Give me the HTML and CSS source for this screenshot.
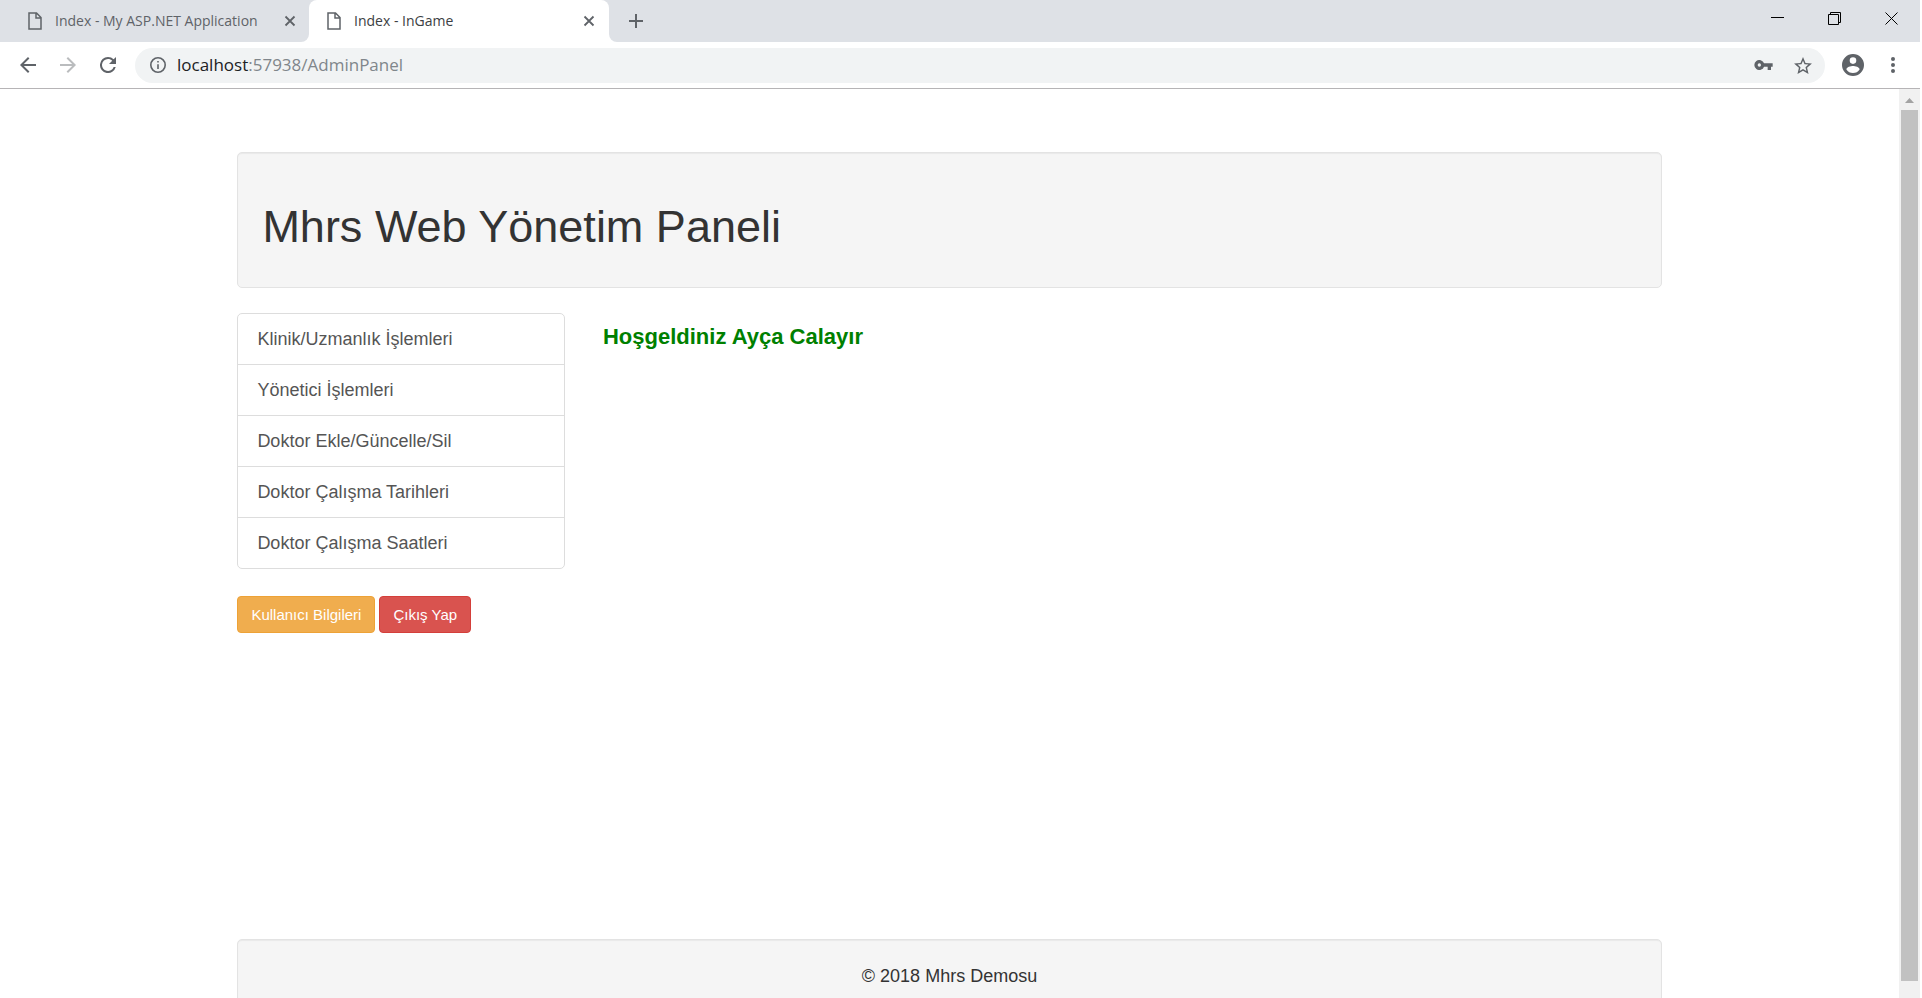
FILE: index.html
```html
<!DOCTYPE html>
<html lang="tr">
<head>
<meta charset="utf-8">
<title>Index - InGame</title>
<link rel="stylesheet" href="styles.css">
</head>
<body>
<div class="browser">
  <div class="tabstrip">
    <div class="tab">
      <svg class="icon-file" viewBox="0 0 14 18"><path d="M1 1h7.500l4.500 4.500v11.500H1zM8 1v5h5"/></svg>
      <span class="tab-title">Index - My ASP.NET Application</span>
      <button class="icon-btn" aria-label="Close tab"><svg class="icon-close" viewBox="0 0 12 12"><path d="M1.500 1.500l9 9M10.500 1.500l-9 9"/></svg></button>
    </div>
    <div class="tab tab-active">
      <svg class="icon-file" viewBox="0 0 14 18"><path d="M1 1h7.500l4.500 4.500v11.500H1zM8 1v5h5"/></svg>
      <span class="tab-title">Index - InGame</span>
      <button class="icon-btn" aria-label="Close tab"><svg class="icon-close" viewBox="0 0 12 12"><path d="M1.500 1.500l9 9M10.500 1.500l-9 9"/></svg></button>
    </div>
    <button class="icon-btn new-tab" aria-label="New tab"><svg class="icon-plus" viewBox="0 0 16 16"><path d="M8 1v14M1 8h14"/></svg></button>
    <div class="window-controls">
      <button class="icon-btn win-btn" aria-label="Minimize"><svg class="icon-win" viewBox="0 0 14 14"><path d="M0 5.500h13"/></svg></button>
      <button class="icon-btn win-btn" aria-label="Restore"><svg class="icon-win" viewBox="0 0 14 14"><path d="M.5 2.500h10v10H.5zM2.500 2.500v-2h10v10h-2"/></svg></button>
      <button class="icon-btn win-btn" aria-label="Close"><svg class="icon-win" viewBox="0 0 14 14"><path d="M.5.500l12 12M12.500.500l-12 12"/></svg></button>
    </div>
  </div>
  <div class="toolbar">
    <button class="icon-btn nav-btn" aria-label="Back"><svg class="icon-nav" viewBox="4 4 16 16"><path d="M20 11H7.830l5.590-5.590L12 4l-8 8 8 8 1.410-1.410L7.830 13H20z"/></svg></button>
    <button class="icon-btn nav-btn nav-off" aria-label="Forward"><svg class="icon-nav" viewBox="4 4 16 16"><path d="M12 4l-1.410 1.410L16.170 11H4v2h12.170l-5.580 5.590L12 20l8-8z"/></svg></button>
    <button class="icon-btn nav-btn" aria-label="Reload"><svg class="icon-nav" viewBox="4 4 16 16"><path d="M17.650 6.350A7.960 7.960 0 0 0 12 4a8 8 0 1 0 7.730 10h-2.080A6 6 0 1 1 12 6c1.660 0 3.140.690 4.220 1.780L13 11h7V4z"/></svg></button>
    <div class="omnibox">
      <svg class="icon-info" viewBox="2 2 20 20"><path d="M11 7h2v2h-2zm0 4h2v6h-2zm1-9a10 10 0 1 0 0 20 10 10 0 0 0 0-20zm0 18a8 8 0 1 1 0-16 8 8 0 0 1 0 16z"/></svg>
      <div class="url">localhost<span class="url-rest">:57938/AdminPanel</span></div>
      <button class="icon-btn" aria-label="Saved passwords"><svg class="icon-key" viewBox="1 6 22 12"><path d="M12.650 10A6 6 0 1 0 12.650 14H17v4h4v-4h2v-4zM7 14a2 2 0 1 1 0-4 2 2 0 0 1 0 4z"/></svg></button>
      <button class="icon-btn" aria-label="Bookmark"><svg class="icon-star" viewBox="2 2 20 19"><path d="M22 9.240l-7.190-.620L12 2 9.190 8.630 2 9.240l5.460 4.730L5.820 21 12 17.270 18.180 21l-1.630-7.030zM12 15.400l-3.760 2.270 1-4.280-3.320-2.880 4.380-.380L12 6.100l1.710 4.040 4.380.380-3.320 2.880 1 4.280z"/></svg></button>
    </div>
    <button class="icon-btn" aria-label="Profile"><svg class="icon-user" viewBox="2 2 20 20"><path d="M12 2a10 10 0 1 0 0 20 10 10 0 0 0 0-20zm0 3a3 3 0 1 1 0 6 3 3 0 0 1 0-6zm0 14.200a7.200 7.200 0 0 1-6-3.220c.030-1.990 4-3.080 6-3.080s5.970 1.090 6 3.080a7.200 7.200 0 0 1-6 3.220z"/></svg></button>
    <button class="icon-btn" aria-label="Menu"><svg class="icon-dots" viewBox="0 0 4 16"><circle cx="2" cy="2" r="2"/><circle cx="2" cy="8" r="2"/><circle cx="2" cy="14" r="2"/></svg></button>
  </div>
  <div class="viewport">
    <div class="page">
      <div class="container">
        <header class="well"><h1>Mhrs Web Yönetim Paneli</h1></header>
        <div class="row">
          <aside class="sidebar">
            <nav class="list-group">
              <a href="#">Klinik/Uzmanlık İşlemleri</a>
              <a href="#">Yönetici İşlemleri</a>
              <a href="#">Doktor Ekle/Güncelle/Sil</a>
              <a href="#">Doktor Çalışma Tarihleri</a>
              <a href="#">Doktor Çalışma Saatleri</a>
            </nav>
            <div class="actions">
              <button class="btn btn-warning">Kullanıcı Bilgileri</button>
              <button class="btn btn-danger">Çıkış Yap</button>
            </div>
          </aside>
          <main class="content"><h2>Hoşgeldiniz Ayça Calayır</h2></main>
        </div>
        <footer class="well footer"><p>© 2018 Mhrs Demosu</p></footer>
      </div>
    </div>
    <div class="scrollbar">
      <svg class="icon-up" viewBox="0 0 9 5"><path d="M0 5l4.500-5L9 5z"/></svg>
      <div class="thumb"></div>
    </div>
  </div>
</div>
</body>
</html>
```

FILE: styles.css
```css
* { box-sizing: border-box; }

body {
  margin: 0;
  background: #fff;
  color: #333;
  font-family: "Liberation Sans", Arial, sans-serif;
  font-size: 18px;
  line-height: 26px;
}

button { font-family: inherit; cursor: pointer; }
svg { display: block; }

.browser { display: flex; flex-direction: column; height: 100vh; padding-right: 2px; overflow: hidden; }

.icon-btn { display: flex; align-items: center; justify-content: center; padding: 0; border: 0; background: none; color: #5f6368; }

/* Tab strip: white shows behind the rounded lower corners beside the active tab */
.tabstrip {
  display: flex;
  flex: none;
  height: 42px;
  background: linear-gradient(#dee1e6, #dee1e6) no-repeat 0 0 / 100% 50%, linear-gradient(90deg, #fff 640px, #dee1e6 640px);
  font-family: "Open Sans", "Noto Sans", sans-serif;
  font-size: 14px;
}
.tab { display: flex; align-items: center; width: 309px; padding: 0 13px 0 28px; border-radius: 0 0 8px 0; background: #dee1e6; color: #5f6368; }
.tab-active { width: 300px; padding: 0 14px 0 18px; background: #fff; border-radius: 8px 8px 0 0; color: #3c4043; }
.tab-title { flex: 1; margin-left: 13px; white-space: nowrap; }
.new-tab { width: 54px; border-radius: 0 0 0 8px; background: #dee1e6; }
.window-controls { display: flex; margin-left: auto; }
.win-btn { width: 57px; height: 37px; color: #000; }

.icon-file { width: 14px; height: 18px; fill: none; stroke: #5f6368; stroke-width: 1.5; }
.icon-close { width: 12px; height: 12px; fill: none; stroke: currentColor; stroke-width: 1.8; }
.icon-plus { width: 16px; height: 16px; fill: none; stroke: currentColor; stroke-width: 2; }
.icon-win { width: 14px; height: 14px; fill: none; stroke: currentColor; stroke-width: 1; }

/* Address bar */
.toolbar { display: flex; flex: none; align-items: center; height: 47px; padding: 0 25px 0 8px; border-bottom: 1px solid #b6b4b6; }
.nav-btn { width: 40px; height: 40px; }
.nav-off { color: #babcbe; }
.omnibox { display: flex; flex: 1; align-items: center; gap: 21px; height: 35px; margin: 0 17px 0 7px; padding: 0 13px 0 15px; border-radius: 18px; background: #f1f3f4; }
.url { flex: 1; margin-left: -10px; color: #202124; font-family: "Open Sans", "Noto Sans", sans-serif; font-size: 17px; }
.url-rest { color: #80868b; }
.toolbar > .icon-btn:last-child { margin-left: 27px; }
.icon-nav, .icon-info, .icon-key, .icon-star, .icon-user, .icon-dots, .icon-up { fill: currentColor; }
.icon-nav { width: 16px; height: 16px; }
.icon-info { width: 16px; height: 16px; color: #5f6368; }
.icon-key { width: 19px; height: 10px; }
.icon-star { width: 18px; height: 17px; }
.icon-user { width: 22px; height: 22px; }
.icon-dots { width: 4px; height: 16px; }

/* Page area */
.viewport { display: flex; flex: 1; min-height: 0; }
.page { flex: 1; overflow: hidden; padding-top: 63px; }
.container { width: 75%; margin: 0 auto; }

.well {
  padding: 23px 24px;
  border: 1px solid #e3e3e3;
  border-radius: 5px;
  background: #f5f5f5;
  box-shadow: inset 0 1px 1px rgba(0, 0, 0, .05);
}
.well h1 { margin: 26px 0 12px; font-size: 45px; font-weight: 500; line-height: 50px; }

.row { display: grid; grid-template-columns: repeat(12, 1fr); column-gap: 38px; margin-top: 25px; }
.sidebar { grid-column: span 3; }
.content { grid-column: span 9; }
.content h2 { margin: 10px 0; color: #008000; font-size: 22px; font-weight: 700; line-height: 28px; }

.list-group { border: 1px solid #ddd; border-radius: 5px; }
.list-group a { display: block; padding: 12px 19px; color: #555; text-decoration: none; }
.list-group a + a { border-top: 1px solid #ddd; }

.actions { display: flex; gap: 4px; margin-top: 27px; }
.btn { padding: 6px 13px; border: 1px solid; border-radius: 4px; color: #fff; font-size: 15px; line-height: 23px; white-space: nowrap; }
.btn-warning { background: #f0ad4e; border-color: #eea236; }
.btn-danger { background: #d9534f; border-color: #d43f3a; }

.footer { margin-top: 306px; text-align: center; }
.footer p { margin: 0 0 12px; }

/* Scroll bar */
.scrollbar { display: flex; flex: none; flex-direction: column; align-items: center; width: 21px; padding-bottom: 17px; background: #f1f1f1; }
.icon-up { flex: none; width: 9px; height: 5px; margin: 9px 0 7px; color: #a3a3a3; }
.thumb { flex: 1; width: 17px; background: #c1c1c1; }
```
